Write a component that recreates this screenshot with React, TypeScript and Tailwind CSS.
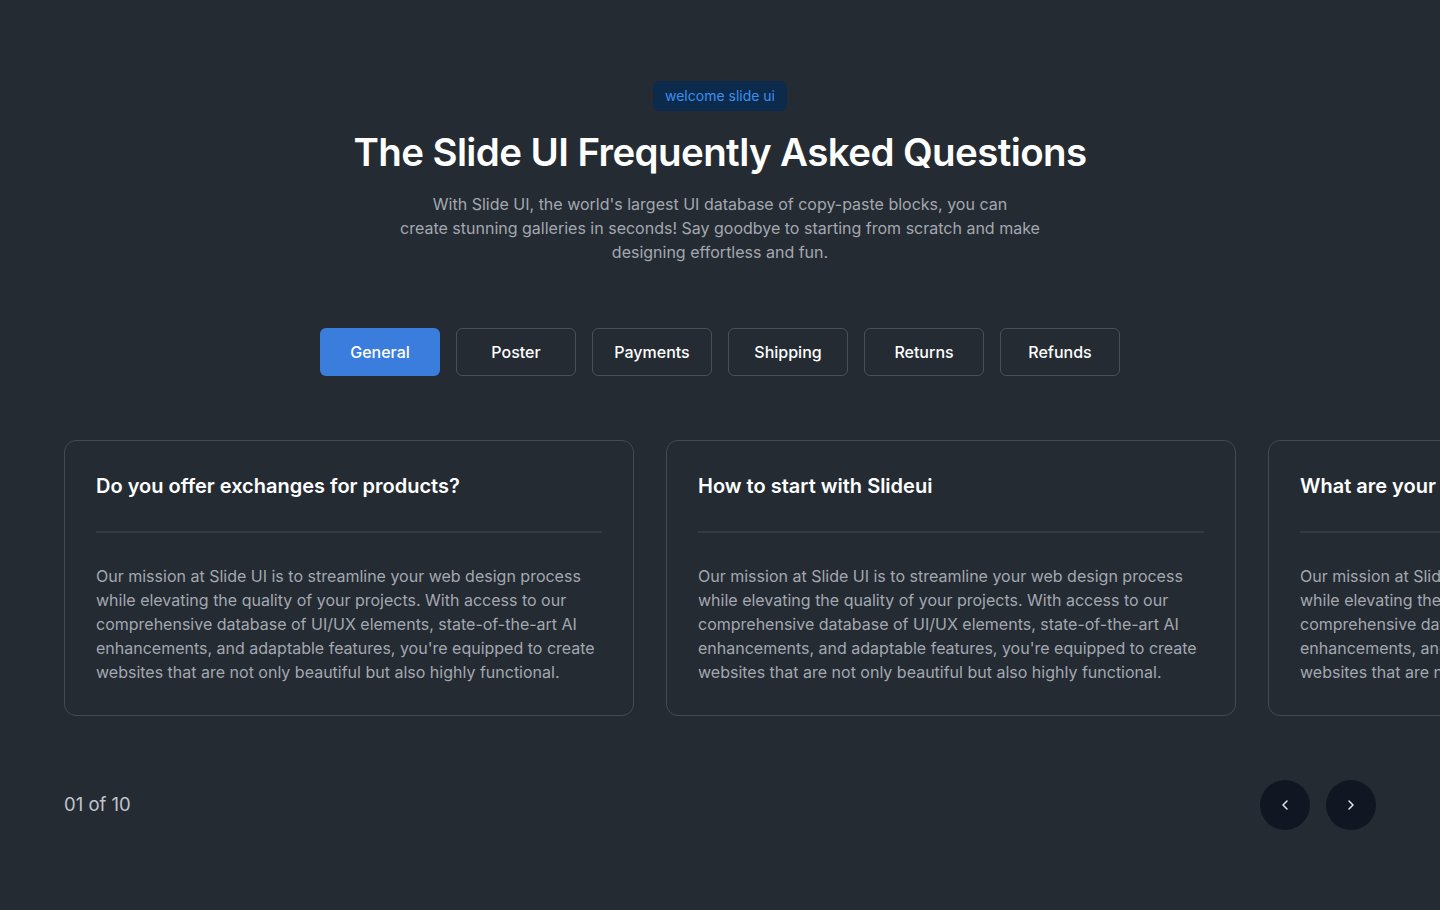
import React from "react";

const tabs = ["General", "Poster", "Payments", "Shipping", "Returns", "Refunds"];
const cards = [
  "Do you offer exchanges for products?",
  "How to start with Slideui",
  "What are your shipping options?",
];
const body =
  "Our mission at Slide UI is to streamline your web design process while elevating the quality of your projects. With access to our comprehensive database of UI/UX elements, state-of-the-art AI enhancements, and adaptable features, you're equipped to create websites that are not only beautiful but also highly functional.";

export default function App() {
  return (
    <div
      className="min-h-[910px] w-full overflow-hidden bg-[#252b33] text-white"
      style={{ fontFamily: "Inter, 'Noto Sans', sans-serif" }}
    >
      <div className="flex flex-col items-center pt-[81px]">
        <span className="rounded-md bg-[#0c2a4b] px-3 py-[5px] text-sm leading-5 text-[#3d8ef0]">
          welcome slide ui
        </span>
        <h1 className="mt-[17px] text-[38.5px] font-semibold leading-[48px] tracking-[-0.6px] text-white">
          The Slide UI Frequently Asked Questions
        </h1>
        <p className="mt-[16px] text-center text-base leading-6 text-[#a3a8b0]">
          With Slide UI, the world's largest UI database of copy-paste blocks, you can
          <br />
          create stunning galleries in seconds! Say goodbye to starting from scratch and make
          <br />
          designing effortless and fun.
        </p>
        <div className="mt-[64px] flex gap-4">
          {tabs.map((t, i) => (
            <button
              key={t}
              className={
                i === 0
                  ? "h-12 w-[120px] rounded-md bg-[#3b7ddd] text-base font-medium text-white"
                  : "h-12 w-[120px] rounded-md border border-[#4a5059] text-base font-medium text-white"
              }
            >
              {t}
            </button>
          ))}
        </div>
      </div>
      <div className="mt-[64px] flex gap-8 pl-16">
        {cards.map((c) => (
          <div
            key={c}
            className="flex w-[570px] shrink-0 flex-col rounded-xl border border-[#434a53] px-[31px] pb-[31px] pt-8"
          >
            <h3 className="whitespace-nowrap text-xl font-semibold leading-[26px] text-white">{c}</h3>
            <div className="mb-[31px] mt-8 h-[2px] w-full bg-[#353b43]" />
            <p className="text-base leading-6 text-[#a3a8b0]">{body}</p>
          </div>
        ))}
      </div>
      <div className="mt-[64px] flex items-center justify-between px-16">
        <span className="text-[18.5px] text-[#c0c5cc]">01 of 10</span>
        <div className="flex gap-4">
          <button className="flex h-[50px] w-[50px] items-center justify-center rounded-full bg-[#111722]">
            <svg width="16" height="16" viewBox="0 0 24 24" fill="none" stroke="#e5e7eb" strokeWidth="2.2" strokeLinecap="round" strokeLinejoin="round">
              <path d="M15 18l-6-6 6-6" />
            </svg>
          </button>
          <button className="flex h-[50px] w-[50px] items-center justify-center rounded-full bg-[#111722]">
            <svg width="16" height="16" viewBox="0 0 24 24" fill="none" stroke="#e5e7eb" strokeWidth="2.2" strokeLinecap="round" strokeLinejoin="round">
              <path d="M9 18l6-6-6-6" />
            </svg>
          </button>
        </div>
      </div>
    </div>
  );
}
